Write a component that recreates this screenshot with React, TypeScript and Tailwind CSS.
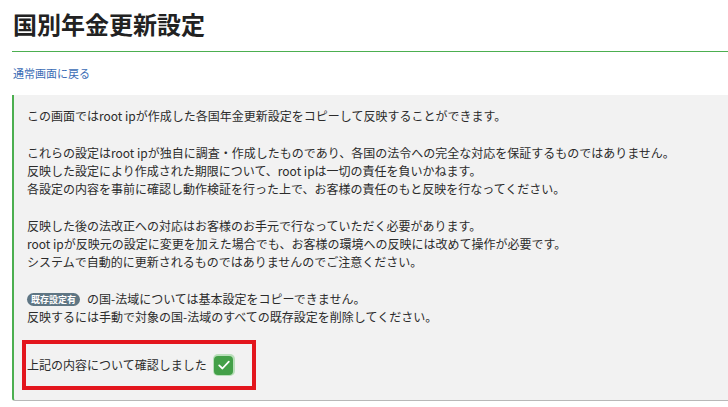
export default function App() {
  return (
    <div
      className="min-h-screen bg-white pl-[12px] text-[#2b2b2b]"
      style={{ fontFamily: '"Noto Sans CJK JP", "Noto Sans", sans-serif' }}
    >
      <div className="border-b border-b-[#4caf50] pt-[6px] pb-[9px]">
        <h1 className="pl-px text-[24px] font-bold leading-[36px] text-[#222]">国別年金更新設定</h1>
      </div>

      <div className="mt-[13px] pl-px text-[11px] leading-[16px]">
        <a href="#" className="text-[#3b6cb5]">
          通常画面に戻る
        </a>
      </div>

      <div className="mt-[14px] rounded-bl-[3px] border-b border-l-2 border-b-[#b8b8b8] border-l-[#4caf50] bg-[#f2f2f2] pt-[12px] pb-[10px] pl-[13px] text-[12px] leading-[18px]">
        <p className="mb-[19px]">この画面ではroot ipが作成した各国年金更新設定をコピーして反映することができます。</p>

        <p className="mb-[19px]">
          これらの設定はroot ipが独自に調査・作成したものであり、各国の法令への完全な対応を保証するものではありません。
          <br />
          反映した設定により作成された期限について、root ipは一切の責任を負いかねます。
          <br />
          各設定の内容を事前に確認し動作検証を行った上で、お客様の責任のもと反映を行なってください。
        </p>

        <p className="mb-[19px]">
          反映した後の法改正への対応はお客様のお手元で行なっていただく必要があります。
          <br />
          root ipが反映元の設定に変更を加えた場合でも、お客様の環境への反映には改めて操作が必要です。
          <br />
          システムで自動的に更新されるものではありませんのでご注意ください。
        </p>

        <p>
          <span className="mr-[7px] inline-block rounded-full bg-[#5f7684] px-[4px] align-[1px] text-[9px] leading-[13px] font-bold text-white">
            既存設定有
          </span>
          の国-法域については基本設定をコピーできません。
          <br />
          反映するには手動で対象の国-法域のすべての既存設定を削除してください。
        </p>

        <div className="mt-[14px] -ml-[5px] flex h-[50px] w-[234px] items-center border-4 border-[#e3161d] pl-px">
          <label className="flex items-center gap-[6px]">
            <span>上記の内容について確認しました</span>
            <span className="flex h-[22px] w-[22px] items-center justify-center rounded-[5px] bg-[#b9dfba]">
              <span className="flex h-[19px] w-[19px] items-center justify-center rounded-[4px] bg-[#43a048]">
                <svg width="14" height="14" viewBox="0 0 16 16" fill="none">
                  <path d="M2.5 8.5 L6.2 12 L13.5 4.2" stroke="white" strokeWidth="2" strokeLinecap="round" strokeLinejoin="round" />
                </svg>
              </span>
            </span>
          </label>
        </div>
      </div>
    </div>
  );
}
